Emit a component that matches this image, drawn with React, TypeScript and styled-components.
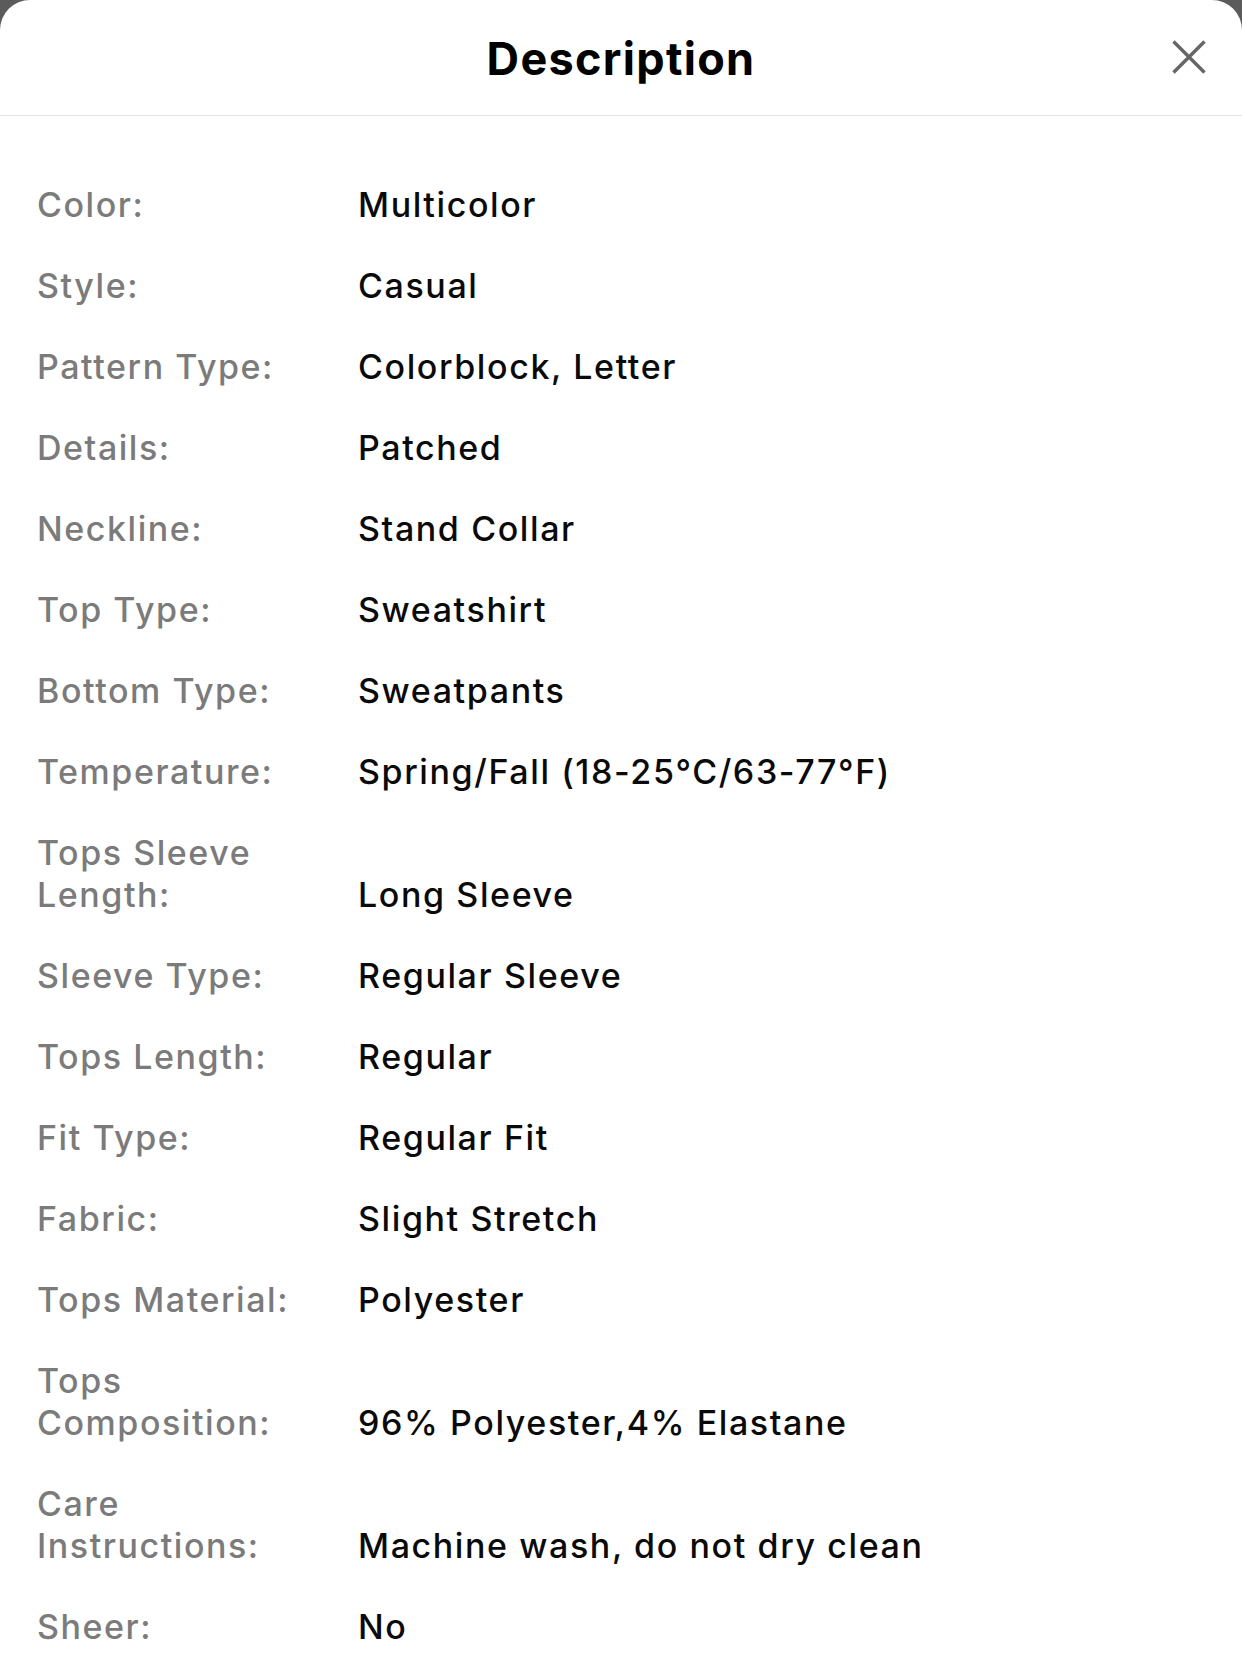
import React from "react";
import styled, { createGlobalStyle } from "styled-components";

const GlobalStyle = createGlobalStyle`
  html, body {
    margin: 0;
    padding: 0;
    background: #5b5b5b;
  }
  body {
    font-family: Inter, "Noto Sans", "Liberation Sans", sans-serif;
    -webkit-font-smoothing: antialiased;
  }
`;

const Sheet = styled.div`
  background: #ffffff;
  border-radius: 30px 30px 0 0;
  min-height: 1662px;
  box-sizing: border-box;
  overflow: hidden;
`;

const Header = styled.header`
  position: relative;
  height: 116px;
  display: flex;
  align-items: center;
  justify-content: center;
  border-bottom: 1px solid #e4e4e4;
  box-sizing: border-box;
`;

const Title = styled.h1`
  margin: 0;
  padding-top: 2px;
  font-size: 45px;
  font-weight: 700;
  color: #000;
  letter-spacing: 1.3px;
`;

const CloseButton = styled.button`
  position: absolute;
  right: 36px;
  top: 40px;
  width: 34px;
  height: 34px;
  padding: 0;
  border: none;
  background: transparent;
  display: flex;
  align-items: center;
  justify-content: center;
  cursor: pointer;
`;

const List = styled.dl`
  margin: 0;
  padding: 68px 37px 0 37px;
  display: flex;
  flex-direction: column;
  gap: 39px;
`;

const Row = styled.div`
  display: grid;
  grid-template-columns: 321px 1fr;
  align-items: end;
`;

const Label = styled.dt`
  margin: 0;
  max-width: 285px;
  font-size: 34px;
  line-height: 42px;
  font-weight: 500;
  letter-spacing: 1.55px;
  color: #7b7b7b;
`;

const Value = styled.dd`
  margin: 0;
  font-size: 34px;
  line-height: 42px;
  font-weight: 500;
  letter-spacing: 1.6px;
  color: #0a0a0a;
`;

const rows: [string, string][] = [
  ["Color:", "Multicolor"],
  ["Style:", "Casual"],
  ["Pattern Type:", "Colorblock, Letter"],
  ["Details:", "Patched"],
  ["Neckline:", "Stand Collar"],
  ["Top Type:", "Sweatshirt"],
  ["Bottom Type:", "Sweatpants"],
  ["Temperature:", "Spring/Fall (18-25°C/63-77°F)"],
  ["Tops Sleeve Length:", "Long Sleeve"],
  ["Sleeve Type:", "Regular Sleeve"],
  ["Tops Length:", "Regular"],
  ["Fit Type:", "Regular Fit"],
  ["Fabric:", "Slight Stretch"],
  ["Tops Material:", "Polyester"],
  ["Tops Composition:", "96% Polyester,4% Elastane"],
  ["Care Instructions:", "Machine wash, do not dry clean"],
  ["Sheer:", "No"],
];

export default function App() {
  return (
    <>
      <GlobalStyle />
      <Sheet>
        <Header>
          <Title>Description</Title>
          <CloseButton aria-label="Close">
            <svg width="34" height="34" viewBox="0 0 34 34">
              <path
                d="M1.5 1.5 L32.5 32.5 M32.5 1.5 L1.5 32.5"
                stroke="#666666"
                strokeWidth="3.4"
                strokeLinecap="butt"
                fill="none"
              />
            </svg>
          </CloseButton>
        </Header>
        <List>
          {rows.map(([label, value]) => (
            <Row key={label}>
              <Label>{label}</Label>
              <Value>{value}</Value>
            </Row>
          ))}
        </List>
      </Sheet>
    </>
  );
}
